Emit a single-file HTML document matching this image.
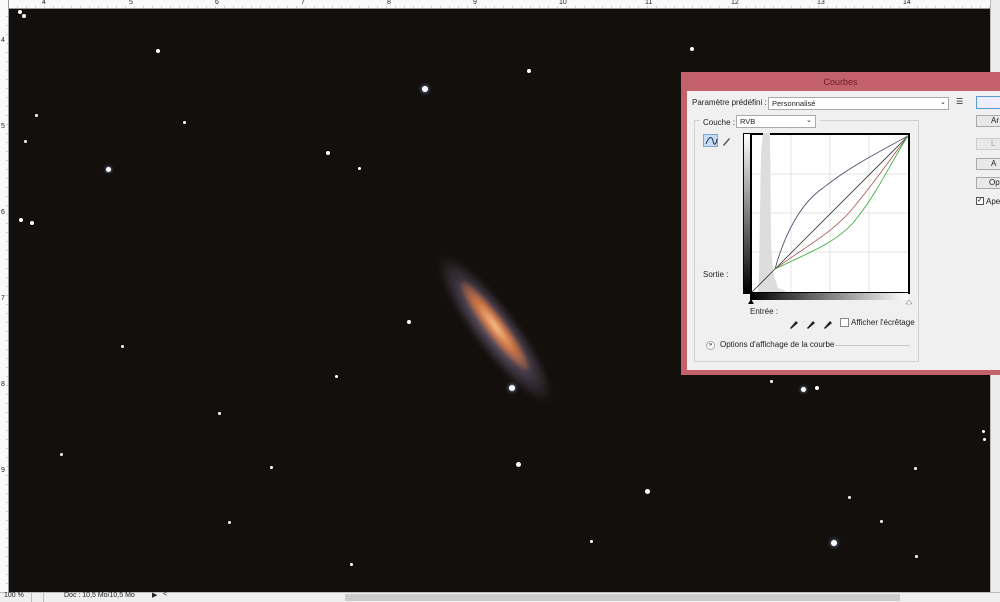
<!DOCTYPE html>
<html><head><meta charset="utf-8"><style>
*{margin:0;padding:0;box-sizing:border-box}
body{width:1000px;height:602px;overflow:hidden;background:#130f0c;font-family:"Liberation Sans",sans-serif;position:relative}
.a{position:absolute}
.s{position:absolute;border-radius:50%;background:#fff}
.t{font-size:8px;color:#222;position:absolute;white-space:nowrap}
.btn{position:absolute;background:#e8e8e8;border:1px solid #a9a9a9;font-size:8px;color:#222;padding-left:14px;line-height:10px}
</style></head><body>
<!-- rulers -->
<div class="a" style="left:0;top:0;width:990px;height:9px;background:#fafafa;border-bottom:1px solid #999"></div>
<div class="a" style="left:0;top:0;width:9px;height:592px;background:#fafafa;border-right:1px solid #999"></div>
<div class="a" style="left:0;top:0;width:1000px;height:9px;background:repeating-linear-gradient(90deg,transparent 0 8px,#888 8px 9px);opacity:.35;clip-path:inset(6px 10px 0 10px)"></div>
<div class="a" style="left:0;top:0;width:9px;height:592px;background:repeating-linear-gradient(0deg,transparent 0 8px,#888 8px 9px);opacity:.35;clip-path:inset(10px 0 0 6px)"></div>
<div class="t" style="left:42px;top:-1px;font-size:7px">4</div><div class="t" style="left:129px;top:-1px;font-size:7px">5</div><div class="t" style="left:215px;top:-1px;font-size:7px">6</div><div class="t" style="left:301px;top:-1px;font-size:7px">7</div><div class="t" style="left:387px;top:-1px;font-size:7px">8</div><div class="t" style="left:473px;top:-1px;font-size:7px">9</div><div class="t" style="left:559px;top:-1px;font-size:7px">10</div><div class="t" style="left:645px;top:-1px;font-size:7px">11</div><div class="t" style="left:731px;top:-1px;font-size:7px">12</div><div class="t" style="left:817px;top:-1px;font-size:7px">13</div><div class="t" style="left:903px;top:-1px;font-size:7px">14</div>
<div class="t" style="left:1px;top:37px;font-size:7px">4</div><div class="t" style="left:1px;top:123px;font-size:7px">5</div><div class="t" style="left:1px;top:209px;font-size:7px">6</div><div class="t" style="left:1px;top:295px;font-size:7px">7</div><div class="t" style="left:1px;top:381px;font-size:7px">8</div><div class="t" style="left:1px;top:467px;font-size:7px">9</div>
<!-- scrollbar right -->
<div class="a" style="left:990px;top:0;width:10px;height:592px;background:#ececec;border-left:1px solid #bbb"></div>
<!-- galaxy -->
<div class="a" style="left:405px;top:307px;width:180px;height:44px;border-radius:50%;transform:rotate(53deg);background:radial-gradient(ellipse,rgba(210,190,210,.6) 0%,rgba(150,130,170,.35) 45%,rgba(60,50,70,0) 72%);filter:blur(2px)"></div>
<div class="a" style="left:440px;top:316px;width:110px;height:20px;border-radius:50%;transform:rotate(53deg);background:radial-gradient(ellipse,rgba(255,200,140,.95) 0%,rgba(230,120,60,.8) 40%,rgba(140,70,40,0) 80%);filter:blur(1.5px)"></div>
<!-- stars -->
<div class="s" style="left:422px;top:86px;width:6px;height:6px;box-shadow:0 0 4px #9bf"></div>
<div class="s" style="left:527px;top:69px;width:4px;height:4px"></div>
<div class="s" style="left:690px;top:47px;width:4px;height:4px"></div>
<div class="s" style="left:156px;top:49px;width:4px;height:4px"></div>
<div class="s" style="left:18px;top:10px;width:4px;height:4px"></div>
<div class="s" style="left:22px;top:14px;width:4px;height:4px"></div>
<div class="s" style="left:35px;top:114px;width:3px;height:3px"></div>
<div class="s" style="left:24px;top:140px;width:3px;height:3px"></div>
<div class="s" style="left:106px;top:167px;width:5px;height:5px;box-shadow:0 0 3px #9bf"></div>
<div class="s" style="left:19px;top:218px;width:4px;height:4px"></div>
<div class="s" style="left:30px;top:221px;width:4px;height:4px"></div>
<div class="s" style="left:326px;top:151px;width:4px;height:4px"></div>
<div class="s" style="left:358px;top:167px;width:3px;height:3px"></div>
<div class="s" style="left:183px;top:121px;width:3px;height:3px"></div>
<div class="s" style="left:407px;top:320px;width:4px;height:4px"></div>
<div class="s" style="left:509px;top:385px;width:6px;height:6px;box-shadow:0 0 4px #9bf"></div>
<div class="s" style="left:516px;top:462px;width:5px;height:5px"></div>
<div class="s" style="left:645px;top:489px;width:5px;height:5px"></div>
<div class="s" style="left:801px;top:387px;width:5px;height:5px;box-shadow:0 0 3px #9bf"></div>
<div class="s" style="left:815px;top:386px;width:4px;height:4px"></div>
<div class="s" style="left:831px;top:540px;width:6px;height:6px;box-shadow:0 0 4px #9bf"></div>
<div class="s" style="left:848px;top:496px;width:3px;height:3px"></div>
<div class="s" style="left:914px;top:467px;width:3px;height:3px"></div>
<div class="s" style="left:982px;top:430px;width:3px;height:3px"></div>
<div class="s" style="left:983px;top:438px;width:3px;height:3px"></div>
<div class="s" style="left:218px;top:412px;width:3px;height:3px"></div>
<div class="s" style="left:228px;top:521px;width:3px;height:3px"></div>
<div class="s" style="left:270px;top:466px;width:3px;height:3px"></div>
<div class="s" style="left:121px;top:345px;width:3px;height:3px"></div>
<div class="s" style="left:350px;top:563px;width:3px;height:3px"></div>
<div class="s" style="left:590px;top:540px;width:3px;height:3px"></div>
<div class="s" style="left:335px;top:375px;width:3px;height:3px"></div>
<div class="s" style="left:60px;top:453px;width:3px;height:3px"></div>
<div class="s" style="left:770px;top:380px;width:3px;height:3px"></div>
<div class="s" style="left:880px;top:520px;width:3px;height:3px"></div>
<div class="s" style="left:915px;top:555px;width:3px;height:3px"></div>
<!-- status bar -->
<div class="a" style="left:0;top:592px;width:1000px;height:10px;background:#efefef;border-top:1px solid #bbb"></div>
<div class="t" style="left:4px;top:592px;font-size:7px">100 %</div>
<div class="a" style="left:31px;top:593px;width:13px;height:9px;border-left:1px solid #bbb;border-right:1px solid #bbb"></div>
<div class="t" style="left:64px;top:592px;font-size:7px">Doc : 10,5 Mo/10,5 Mo</div>
<div class="t" style="left:152px;top:591px;font-size:7px">▶</div>
<div class="t" style="left:163px;top:591px;font-size:7px">&lt;</div>
<div class="a" style="left:345px;top:594px;width:555px;height:7px;background:#ccc"></div>
<!-- dialog -->
<div class="a" style="left:681px;top:72px;width:319px;height:303px;background:#c4626c"></div>
<div class="a" style="left:681px;top:72px;width:319px;height:20px;text-align:center;font-size:9px;line-height:20px;color:#6a1a22">Courbes</div>
<div class="a" style="left:687px;top:91px;width:313px;height:279px;background:#f0f0f0"></div>
<div class="t" style="left:692px;top:98px">Paramètre prédéfini :</div>
<div class="a" style="left:768px;top:97px;width:181px;height:13px;background:#fff;border:1px solid #aaa"></div>
<div class="t" style="left:772px;top:99px;font-size:7.5px">Personnalisé</div>
<div class="t" style="left:940px;top:98px;font-size:7px">⌄</div>
<div class="t" style="left:956px;top:97px;font-size:8px">☰</div>
<div class="a" style="left:976px;top:96px;width:30px;height:13px;border:1px solid #5b9bd5;background:#eef"></div>
<div class="btn" style="left:976px;top:115px;width:30px;height:12px">Ar</div>
<div class="btn" style="left:976px;top:138px;width:30px;height:12px;color:#aaa;border-color:#ccc">L</div>
<div class="btn" style="left:976px;top:158px;width:30px;height:12px">A</div>
<div class="btn" style="left:976px;top:177px;width:30px;height:12px;padding-left:12px">Opt</div>
<div class="a" style="left:976px;top:197px;width:8px;height:8px;border:1px solid #555;background:#fff;font-size:7px;line-height:6px">✓</div>
<div class="t" style="left:986px;top:197px">Ape</div>
<div class="a" style="left:694px;top:120px;width:225px;height:242px;border:1px solid #d0d0d0"></div>
<div class="a" style="left:700px;top:117px;width:120px;height:12px;background:#f0f0f0"></div>
<div class="t" style="left:703px;top:118px">Couche :</div>
<div class="a" style="left:736px;top:115px;width:80px;height:13px;background:#fff;border:1px solid #aaa"></div>
<div class="t" style="left:740px;top:117px;font-size:7.5px">RVB</div>
<div class="t" style="left:806px;top:116px;font-size:7px">⌄</div>
<div class="a" style="left:703px;top:134px;width:15px;height:13px;background:#c6dcf3;border:1px solid #7aa7d6"></div>
<svg class="a" style="left:703px;top:134px" width="30" height="14"><path d="M3 10 C6 2,9 2,10 7 S13 11,14 5" fill="none" stroke="#235" stroke-width="1"/><path d="M20 11 L26 4 L27 5 L21 12 Z" fill="#555"/></svg>
<svg class="a" style="left:743px;top:133px" width="170" height="172">
<defs><linearGradient id="v" x1="0" y1="0" x2="0" y2="1"><stop offset="0" stop-color="#fff"/><stop offset="1" stop-color="#000"/></linearGradient>
<linearGradient id="h" x1="0" y1="0" x2="1" y2="0"><stop offset="0" stop-color="#000"/><stop offset="1" stop-color="#fff"/></linearGradient></defs>
<rect x="0" y="0" width="167" height="161" fill="#000"/>
<rect x="1" y="1" width="6" height="158" fill="url(#v)"/>
<rect x="9" y="2" width="156" height="157" fill="#fff"/>
<path d="M15 159 L16 140 L18 20 L20 0 L27 0 L28 110 L30 140 L35 155 L45 159 Z" fill="#ddd"/>
<g stroke="#ddd" stroke-width=".8"><line x1="48" y1="2" x2="48" y2="159"/><line x1="87" y1="2" x2="87" y2="159"/><line x1="126" y1="2" x2="126" y2="159"/><line x1="9" y1="41" x2="165" y2="41"/><line x1="9" y1="80" x2="165" y2="80"/><line x1="9" y1="119" x2="165" y2="119"/></g>
<g fill="none" stroke-width=".8">
<path d="M9 159 L32 136" stroke="#333"/>
<path d="M32 136 L165 3" stroke="#333"/>
<path d="M32 136 C42 100,58 70,80 55 C105 35,130 22,165 3" stroke="#446"/>
<path d="M32 136 C60 115,90 100,110 75 C135 45,150 22,165 3" stroke="#a55"/>
<path d="M32 136 C60 122,90 112,110 90 C135 60,150 25,165 3" stroke="#3a3"/>
</g>
<rect x="7" y="160" width="158" height="7" fill="url(#h)"/>
<path d="M5 171 L8 166 L11 171 Z" fill="#000"/>
<path d="M163 171 L166 167 L169 171 Z" fill="#fff" stroke="#888" stroke-width=".6"/>
</svg>
<div class="t" style="left:703px;top:270px">Sortie :</div>
<div class="t" style="left:750px;top:307px">Entrée :</div>
<svg class="a" style="left:788px;top:317px" width="50" height="12"><g fill="#222"><path d="M2 11 L8 4 L10 6 L3 12Z"/><path d="M19 11 L25 4 L27 6 L20 12Z"/><path d="M36 11 L42 4 L44 6 L37 12Z"/></g></svg>
<div class="a" style="left:840px;top:318px;width:9px;height:9px;background:#fff;border:1px solid #888"></div>
<div class="t" style="left:851px;top:318px">Afficher l'écrêtage</div>
<div class="a" style="left:706px;top:341px;width:9px;height:9px;border-radius:50%;border:1px solid #aaa;background:#fff;font-size:6px;line-height:7px;text-align:center">»</div>
<div class="t" style="left:720px;top:340px">Options d'affichage de la courbe</div>
<div class="a" style="left:832px;top:345px;width:78px;height:1px;background:#ccc"></div>
</body></html>
